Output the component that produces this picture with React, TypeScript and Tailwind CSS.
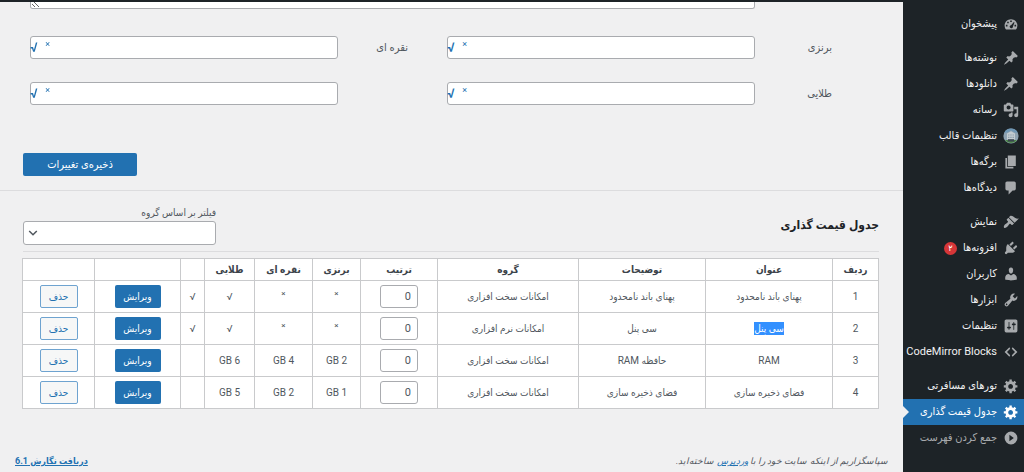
import React from 'react';

const ICONS = {
  dashboard:
    'M3.76 17h12.48A7.96 7.96 0 0 0 18 12c0-4.42-3.58-8-8-8s-8 3.58-8 8c0 1.89.66 3.63 1.76 5zM9 5.5h2v2H9zM5.2 7.2h2v2h-2zM3.6 11h2v2h-2zM14.4 11h2v2h-2zM13.6 7.600l.8.6-2 4.800c.1 1.300-.8 2.300-2 2.300-1.400 0-2.300-1.100-2-2.400.2-.8.9-1.300 1.700-1.400z',
  pin: 'M10.44 3.02l1.82-1.82 6.36 6.35-1.83 1.82c-1.05-.68-2.48-.57-3.41.36l-.75.75c-.92.93-1.04 2.35-.35 3.41l-1.83 1.82-2.41-2.41-2.8 2.79c-.42.42-3.38 2.71-3.8 2.29s1.86-3.39 2.28-3.81l2.79-2.79L4.1 9.36l1.83-1.82c1.05.69 2.48.57 3.4-.36l.75-.75c.93-.92 1.05-2.35.36-3.41z',
  media:
    'M13 11V4c0-.55-.45-1-1-1h-1.67L9 1H5L3.67 3H2c-.55 0-1 .45-1 1v7c0 .55.45 1 1 1h10c.55 0 1-.45 1-1zM7 4.5c1.38 0 2.5 1.12 2.5 2.5S8.38 9.5 7 9.5 4.5 8.38 4.5 7 5.62 4.5 7 4.5zM14 6h5v10.500c0 1.38-1.12 2.5-2.5 2.5S14 17.88 14 16.500s1.12-2.5 2.5-2.5c.17 0 .34.02.5.05V9h-3V6zm-4 8.050V13h2v3.500c0 1.38-1.12 2.5-2.5 2.5S7 17.88 7 16.500 8.120 14 9.500 14c.17 0 .34.02.5.05z',
  page: 'M6 15V2h10v13H6zm-1 1h8v2H3V5h2v11z',
  comment:
    'M5 2h9c1.100 0 2 .9 2 2v7c0 1.100-.9 2-2 2h-2l-5 5v-5H5c-1.100 0-2-.9-2-2V4c0-1.100.9-2 2-2z',
  appearance:
    'M14.48 11.06L7.41 3.99l1.5-1.5c.5-.56 2.3-.47 3.51.32 1.21.8 1.43 1.28 2.91 2.1 1.18.64 2.45 1.26 4.45.85zm-.71.71L6.7 4.7 4.93 6.47c-.39.39-.39 1.02 0 1.41l1.06 1.06c.39.39.39 1.03 0 1.42-.6.6-1.43 1.11-2.21 1.69-.35.26-.7.53-1.01.84C1.43 14.23.4 16.08 1.4 17.07c.99 1 2.84-.03 4.18-1.36.31-.31.58-.66.85-1.02.57-.78 1.08-1.61 1.69-2.21.39-.39 1.02-.39 1.41 0l1.06 1.06c.39.39 1.02.39 1.41 0z',
  plugin:
    'M13.11 4.36L9.87 7.6 8 5.73l3.24-3.24c.35-.34 1.05-.2 1.56.32.52.51.66 1.21.31 1.55zm-8 1.77l.91-1.12 9.01 9.01-1.19.84c-.71.71-2.63 1.16-3.82 1.16H6.14L4.9 17.26c-.59.59-1.54.59-2.12 0-.59-.58-.59-1.53 0-2.12l1.24-1.24v-3.88c0-1.13.4-3.19 1.09-3.89zm7.26 3.97l3.24-3.24c.34-.35 1.04-.21 1.55.31.52.51.66 1.21.31 1.55l-3.24 3.25z',
  user: 'M10 9.25c-2.27 0-2.73-3.44-2.73-3.44C7 4.02 7.82 2 9.97 2c2.16 0 2.98 2.02 2.71 3.81 0 0-.41 3.44-2.68 3.44zm0 2.57L12.72 10c2.39 0 4.52 2.33 4.52 4.53v2.49s-3.65 1.13-7.24 1.13c-3.65 0-7.24-1.13-7.24-1.13v-2.49c0-2.25 1.94-4.48 4.47-4.48z',
  tools:
    'M16.68 9.77c-1.34 1.34-3.3 1.67-4.95.99l-5.41 6.52c-.99.99-2.59.99-3.58 0s-.99-2.59 0-3.57l6.52-5.42c-.68-1.65-.35-3.61.99-4.95 1.28-1.28 3.12-1.62 4.72-1.06l-2.89 2.89 2.82 2.82 2.86-2.87c.53 1.58.18 3.39-1.08 4.65zM3.81 16.21c.4.39 1.04.39 1.43 0 .4-.4.4-1.04 0-1.43-.39-.4-1.03-.4-1.43 0-.39.39-.39 1.03 0 1.43z',
  settings:
    'M18 16V4c0-1.1-.9-2-2-2H4c-1.1 0-2 .9-2 2v12c0 1.1.9 2 2 2h12c1.1 0 2-.9 2-2zM8 11h1c.55 0 1 .45 1 1s-.45 1-1 1H8v1.5c0 .28-.22.5-.5.5s-.5-.22-.5-.5V13H6c-.55 0-1-.45-1-1s.45-1 1-1h1V5.5c0-.28.22-.5.5-.5s.5.22.5.5V11zm5-2h-1c-.55 0-1-.45-1-1s.45-1 1-1h1V5.5c0-.28.22-.5.5-.5s.5.22.5.5V7h1c.55 0 1 .45 1 1s-.45 1-1 1h-1v5.5c0 .28-.22.5-.5.5s-.5-.22-.5-.5V9z',
  code: 'M9 6l-4 4 4 4-1 2-6-6 6-6zm2 8l4-4-4-4 1-2 6 6-6 6z',
  gear: 'M18 12h-2.18c-.17.7-.44 1.35-.81 1.93l1.54 1.54-2.1 2.1-1.54-1.54c-.58.36-1.23.63-1.91.79V19H8v-2.18c-.68-.16-1.33-.43-1.91-.79l-1.54 1.54-2.12-2.12 1.54-1.54c-.36-.58-.63-1.23-.79-1.91H1V9.03h2.17c.16-.7.44-1.35.8-1.94L2.43 5.55l2.1-2.1 1.54 1.54c.58-.37 1.24-.64 1.93-.81V2h3v2.18c.68.16 1.33.43 1.91.79l1.54-1.54 2.12 2.12-1.54 1.54c.36.59.64 1.24.8 1.94H18V12zm-8.5 1.5c1.66 0 3-1.34 3-3s-1.34-3-3-3-3 1.34-3 3 1.34 3 3 3z',
  collapse: 'M10 2a8 8 0 1 0 0 16 8 8 0 0 0 0-16zM8 6l5.500 4L8 14z',
};

type IconName = keyof typeof ICONS | 'avatar';

function Icon({ name }: { name: IconName }) {
  if (name === 'avatar') {
    return (
      <svg viewBox="0 0 20 20" className="size-4 shrink-0" aria-hidden="true">
        <circle cx="10" cy="10" r="9.500" fill="#8ea2b1" />
        <path d="M1.500 6a9.500 9.500 0 0 1 17 0l-4-.5L10 3 5.500 5.500z" fill="#6f97b5" />
        <path d="M5 7l5-3 5 3v8H5z" fill="#c3ccd1" />
        <path d="M6.500 8h1.500v1.500H6.500zM9.200 8h1.500v1.500H9.200zM12 8h1.500v1.500H12zM6.500 11h1.500v1.500H6.500zM9.200 11h1.500v1.500H9.200zM12 11h1.500v1.500H12z" fill="#8396a6" />
        <path d="M2.600 15h14.800a9 9 0 0 1-14.800 0z" fill="#4f8a4a" />
        <path d="M6 14h8v3H6z" fill="#3a4650" />
      </svg>
    );
  }
  return (
    <svg viewBox="0 0 20 20" className="size-4 shrink-0" fill="currentColor" fillRule="evenodd" aria-hidden="true">
      <path d={ICONS[name]} />
    </svg>
  );
}

type Item = { label: string; icon: IconName; badge?: string; active?: boolean };

const MENU: Item[][] = [
  [{ label: 'پیشخوان', icon: 'dashboard' }],
  [
    { label: 'نوشته‌ها', icon: 'pin' },
    { label: 'دانلودها', icon: 'pin' },
    { label: 'رسانه', icon: 'media' },
    { label: 'تنظیمات قالب', icon: 'avatar' },
    { label: 'برگه‌ها', icon: 'page' },
    { label: 'دیدگاه‌ها', icon: 'comment' },
  ],
  [
    { label: 'نمایش', icon: 'appearance' },
    { label: 'افزونه‌ها', icon: 'plugin', badge: '۲' },
    { label: 'کاربران', icon: 'user' },
    { label: 'ابزارها', icon: 'tools' },
    { label: 'تنظیمات', icon: 'settings' },
    { label: 'CodeMirror Blocks', icon: 'code' },
  ],
  [
    { label: 'تورهای مسافرتی', icon: 'gear' },
    { label: 'جدول قیمت گذاری', icon: 'gear', active: true },
  ],
];

function MenuItem({ item }: { item: Item }) {
  return (
    <li>
      <a
        href="#"
        className={
          item.active
            ? 'relative flex h-[26px] items-center gap-1.5 whitespace-nowrap bg-[#2271b1] pr-[5px] text-white'
            : 'flex h-[26px] items-center gap-1.5 whitespace-nowrap pr-[5px] text-[#f0f0f1]'
        }
      >
        <span className={item.active ? 'text-white' : 'text-[#a7aaad]'}>
          <Icon name={item.icon} />
        </span>
        <span>{item.label}</span>
        {item.badge && (
          <span className="flex size-[13px] items-center justify-center rounded-full bg-[#d63638] text-[9px] text-white">
            {item.badge}
          </span>
        )}
        {item.active && (
          <span className="absolute left-0 top-[7px] border-y-6 border-l-6 border-y-transparent border-l-[#f0f0f1]" />
        )}
      </a>
    </li>
  );
}

function Sidebar() {
  return (
    <nav className="flex w-[121px] shrink-0 flex-col gap-2 bg-[#1d2327] pt-[9px] text-[11px]">
      {MENU.map((group, i) => (
        <ul key={i}>
          {group.map((item) => (
            <MenuItem key={item.label} item={item} />
          ))}
          {i === MENU.length - 1 && (
            <li>
              <button
                type="button"
                className="flex h-[26px] w-full items-center gap-1.5 whitespace-nowrap pr-[5px] text-[#a7aaad]"
              >
                <Icon name="collapse" />
                <span>جمع کردن فهرست</span>
              </button>
            </li>
          )}
        </ul>
      ))}
    </nav>
  );
}

function ValueField({ id, label, second }: { id: string; label: string; second?: boolean }) {
  return (
    <>
      <label htmlFor={id} className={second ? 'ps-[39px]' : ''}>
        {label}
      </label>
      <div className="relative">
        <input
          id={id}
          type="text"
          className="block h-[23px] w-full rounded-[3px] border border-[#a9abaf] bg-white px-2 outline-none"
        />
        <div className="absolute inset-y-0 left-0 flex items-center gap-2 text-[#2271b1]">
          <button type="button" className="pb-2 text-[9px] leading-3">
            ×
          </button>
          <button type="button" className="text-[13px] font-bold">
            √
          </button>
        </div>
      </div>
    </>
  );
}

const HEADERS = ['ردیف', 'عنوان', 'توضیحات', 'گروه', 'ترتیب', 'برنزی', 'نقره ای', 'طلایی', '', '', ''];

const ROWS = [
  { title: 'پهنای باند نامحدود', desc: 'پهنای باند نامحدود', group: 'امکانات سخت افزاری', plans: ['×', '×', '√', '√'] },
  { title: 'سی پنل', desc: 'سی پنل', group: 'امکانات نرم افزاری', plans: ['×', '×', '√', '√'], selected: true },
  { title: 'RAM', desc: 'حافظه RAM', group: 'امکانات سخت افزاری', plans: ['2 GB', '4 GB', '6 GB', ''] },
  { title: 'فضای ذخیره سازی', desc: 'فضای ذخیره سازی', group: 'امکانات سخت افزاری', plans: ['1 GB', '2 GB', '5 GB', ''] },
];

function PricingTable() {
  return (
    <table className="w-full table-fixed border-collapse bg-white text-center text-[10px] text-[#50575e] [&_td]:border [&_td]:border-[#c9cacc] [&_th]:border [&_th]:border-[#c9cacc]">
      <colgroup>
        <col className="w-[46px]" />
        <col className="w-[127px]" />
        <col className="w-[127px]" />
        <col className="w-[141px]" />
        <col className="w-[77px]" />
        <col className="w-[48px]" />
        <col className="w-[58px]" />
        <col className="w-[50px]" />
        <col className="w-[24px]" />
        <col className="w-[86px]" />
        <col className="w-[72px]" />
      </colgroup>
      <thead>
        <tr className="h-[22px] text-[#3c434a]">
          {HEADERS.map((h, i) => (
            <th key={i} scope="col" className="font-bold">
              {h}
            </th>
          ))}
        </tr>
      </thead>
      <tbody>
        {ROWS.map((row, i) => (
          <tr key={i} className="h-8">
            <td>{i + 1}</td>
            <td>
              <span className={row.selected ? 'bg-[#3390ff] py-px text-white' : ''}>{row.title}</span>
            </td>
            <td>{row.desc}</td>
            <td>{row.group}</td>
            <td>
              <input
                type="text"
                defaultValue="0"
                aria-label={`ترتیب ${row.title}`}
                className="mx-auto block h-[23px] w-[38px] rounded-[3px] border border-[#a9abaf] bg-white pr-1.5 text-[11px] outline-none"
              />
            </td>
            {row.plans.map((p, j) => (
              <td key={j}>{p === '×' ? <span className="block pb-1.5 text-[8px] leading-3">{p}</span> : p}</td>
            ))}
            <td>
              <button type="button" className="h-[23px] w-[46px] rounded-xs bg-[#2271b1] text-white">
                ویرایش
              </button>
            </td>
            <td>
              <button
                type="button"
                className="h-[23px] w-[38px] rounded-xs border border-[#6ea3d0] bg-[#f6f7f7] text-[#2271b1]"
              >
                حذف
              </button>
            </td>
          </tr>
        ))}
      </tbody>
    </table>
  );
}

export default function App() {
  return (
    <div
      dir="rtl"
      className="flex min-h-screen flex-col bg-[#f0f0f1] font-[Roboto,'DejaVu_Sans_Condensed','DejaVu_Sans',sans-serif] text-[10px] leading-4 text-[#50575e]"
    >
      <div className="h-0.5 bg-[#1d2327]" />
      <div className="flex grow">
        <Sidebar />
        <main className="flex min-w-0 grow flex-col">
          <form>
            <div className="pl-[30px] pr-[71px] text-[11px]">
              <div className="flex">
                <div className="w-[77px] shrink-0" />
                <textarea
                  aria-label="توضیحات"
                  className="block h-[7px] min-h-0 grow resize rounded-b-[3px] border border-t-0 border-[#a9abaf] bg-white"
                />
              </div>
              <div className="mt-[27px] grid grid-cols-[77px_1fr_109px_1fr] items-center gap-y-[23px]">
                <ValueField id="bronze" label="برنزی" />
                <ValueField id="silver" label="نقره ای" second />
                <ValueField id="gold" label="طلایی" />
                <ValueField id="extra" label="" second />
              </div>
            </div>
            <div className="mt-12 flex justify-end border-b border-[#dcdcde] pb-3.5 pl-[23px]">
              <button type="submit" className="h-[23px] w-[114px] rounded-xs bg-[#2271b1] text-[11px] text-white">
                ذخیره‌ی تغییرات
              </button>
            </div>
          </form>

          <section className="pl-[23px] pr-6 pt-3.5">
            <div className="flex items-center justify-between border-b border-[#dcdcde] pb-1.5">
              <h2 className="text-xs font-bold text-[#1d2327]">جدول قیمت گذاری</h2>
              <div className="w-[193px]">
                <label htmlFor="group-filter" className="block">
                  فیلتر بر اساس گروه
                </label>
                <div className="relative">
                  <select
                    id="group-filter"
                    defaultValue=""
                    className="block h-6 w-full appearance-none rounded-[3px] border border-[#a9abaf] bg-white px-2 outline-none"
                  >
                    <option value=""></option>
                    <option value="hardware">امکانات سخت افزاری</option>
                    <option value="software">امکانات نرم افزاری</option>
                  </select>
                  <svg
                    viewBox="0 0 10 10"
                    className="pointer-events-none absolute left-[5px] top-[7px] size-2.5"
                    fill="none"
                    stroke="#50575e"
                    strokeWidth="1.5"
                    aria-hidden="true"
                  >
                    <path d="M1.200 3l3.800 3.800L8.800 3" />
                  </svg>
                </div>
              </div>
            </div>
            <div className="mt-1.5">
              <PricingTable />
            </div>
          </section>

          <footer className="mt-auto flex items-center justify-between px-[15px] pb-[3px] text-[9px] leading-4">
            <p className="italic">
              سپاسگزاریم از اینکه سایت خود را با{' '}
              <a href="#" className="text-[#2271b1] underline">
                وردپرس
              </a>{' '}
              ساخته‌اید.
            </p>
            <a href="#" className="font-bold text-[#2271b1] underline">
              دریافت نگارش 6.1
            </a>
          </footer>
        </main>
      </div>
    </div>
  );
}
